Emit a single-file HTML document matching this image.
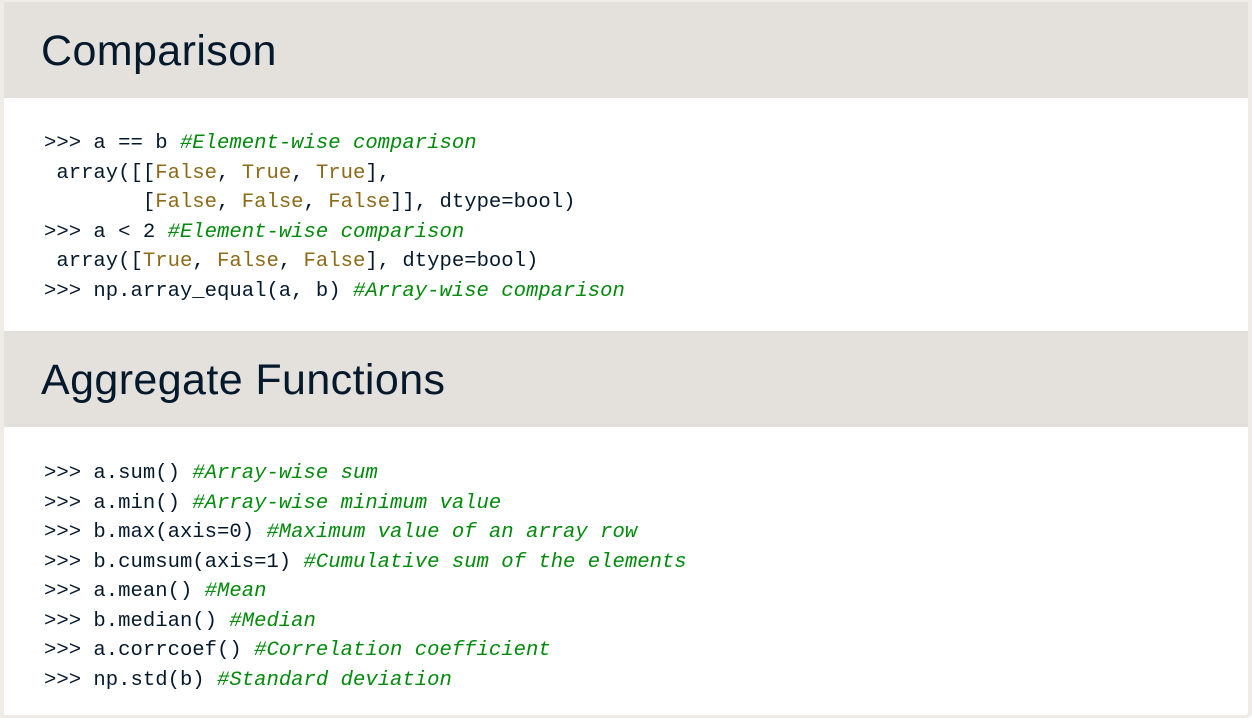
<!DOCTYPE html>
<html><head><style>
html,body{margin:0;padding:0;background:#fff;}
body{width:1252px;height:720px;overflow:hidden;position:relative;font-family:"Liberation Sans",sans-serif;}
.frame{position:absolute;left:0;top:0;width:1244px;height:713px;border:4px solid #efebe6;border-top-width:2px;border-bottom-width:3px;border-radius:0 0 6px 0;overflow:hidden;background:#fff;}
.hd{position:absolute;left:0;width:1244px;height:96px;background:#e4e0db;}
.hd span{position:absolute;left:37px;top:25px;font-size:43px;color:#05192d;letter-spacing:0.4px;}
.code{position:absolute;left:40px;font-family:"Liberation Mono",monospace;font-size:20.6px;line-height:29.5px;color:#05192d;white-space:pre;margin:0;}
.c{color:#038a0c;font-style:italic;}
.k{color:#8c6a17;}
</style></head><body>
<div class="frame">
<div class="hd" style="top:0"><span>Comparison</span></div>
<pre class="code" style="top:127px">&gt;&gt;&gt; a == b <span class="c">#Element-wise comparison</span>
 array([[<span class="k">False</span>, <span class="k">True</span>, <span class="k">True</span>],
        [<span class="k">False</span>, <span class="k">False</span>, <span class="k">False</span>]], dtype=bool)
&gt;&gt;&gt; a &lt; 2 <span class="c">#Element-wise comparison</span>
 array([<span class="k">True</span>, <span class="k">False</span>, <span class="k">False</span>], dtype=bool)
&gt;&gt;&gt; np.array_equal(a, b) <span class="c">#Array-wise comparison</span></pre>
<div class="hd" style="top:329px"><span>Aggregate Functions</span></div>
<pre class="code" style="top:457px">&gt;&gt;&gt; a.sum() <span class="c">#Array-wise sum</span>
&gt;&gt;&gt; a.min() <span class="c">#Array-wise minimum value</span>
&gt;&gt;&gt; b.max(axis=0) <span class="c">#Maximum value of an array row</span>
&gt;&gt;&gt; b.cumsum(axis=1) <span class="c">#Cumulative sum of the elements</span>
&gt;&gt;&gt; a.mean() <span class="c">#Mean</span>
&gt;&gt;&gt; b.median() <span class="c">#Median</span>
&gt;&gt;&gt; a.corrcoef() <span class="c">#Correlation coefficient</span>
&gt;&gt;&gt; np.std(b) <span class="c">#Standard deviation</span></pre>
</div>
</body></html>
